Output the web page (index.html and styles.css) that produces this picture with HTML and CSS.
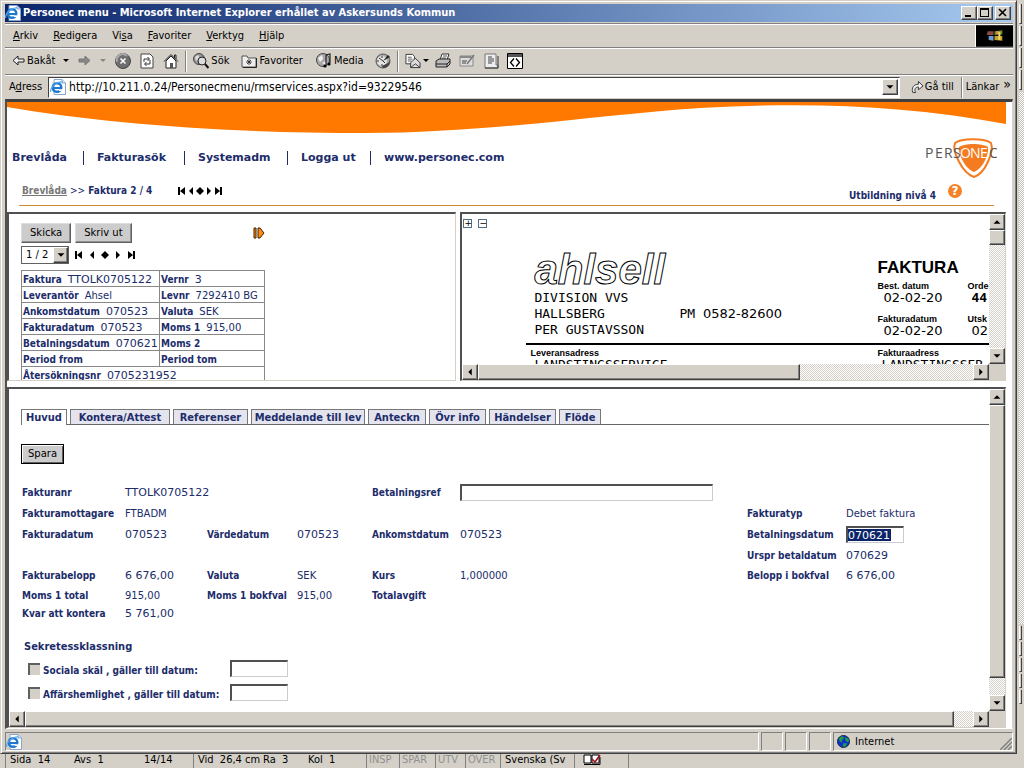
FILE: index.html
```html
<!DOCTYPE html>
<html lang="sv">
<head>
<meta charset="utf-8">
<title>Personec menu</title>
<link rel="stylesheet" href="styles.css">
</head>
<body>
<svg class="defs" aria-hidden="true">
  <symbol id="ie" viewBox="0 0 16 16">
    <path d="M4 .5H12L15.500 4V15.500H4Z" fill="#fff" stroke="#8aa6cc"/>
    <path d="M12 .5V4H15.500" fill="#cfe0f5" stroke="#8aa6cc"/>
    <circle cx="7" cy="8.500" r="4.300" fill="none" stroke="#1f78d0" stroke-width="2.400"/>
    <path d="M3 9H11" stroke="#1f78d0" stroke-width="2"/>
    <path d="M9 10.300H13V12H9Z" fill="#fff"/>
    <path d="M1 13C-1 9 7 2 12.500 3" fill="none" stroke="#58a8ec" stroke-width="1.200"/>
  </symbol>
  <symbol id="up" viewBox="0 0 16 16"><path d="M4 10H12L8 6Z"/></symbol>
  <symbol id="down" viewBox="0 0 16 16"><path d="M4 6H12L8 10Z"/></symbol>
  <symbol id="left" viewBox="0 0 16 16"><path d="M10 4V12L6 8Z"/></symbol>
  <symbol id="right" viewBox="0 0 16 16"><path d="M6 4V12L10 8Z"/></symbol>
  <symbol id="first" viewBox="0 0 8 8"><path d="M0 0H2V8H0ZM7 0V8L2 4Z"/></symbol>
  <symbol id="prev" viewBox="0 0 8 8"><path d="M6 0V8L2 4Z"/></symbol>
  <symbol id="mid" viewBox="0 0 8 8"><path d="M4 0L8 4L4 8L0 4Z"/></symbol>
  <symbol id="next" viewBox="0 0 8 8"><path d="M2 0V8L6 4Z"/></symbol>
  <symbol id="last" viewBox="0 0 8 8"><path d="M6 0H8V8H6ZM1 0V8L6 4Z"/></symbol>
</svg>

<div class="desktop">
<main class="window">
  <header class="titlebar">
    <svg class="i16"><use href="#ie"/></svg>
    <h1>Personec menu - Microsoft Internet Explorer erhållet av Askersunds Kommun</h1>
    <div class="winbtns">
      <button aria-label="Minimera"><svg viewBox="0 0 12 10"><path d="M2 7H8V9H2Z"/></svg></button>
      <button aria-label="Maximera"><svg viewBox="0 0 12 10"><path d="M1 0H10V9H1ZM2 2V8H9V2Z" fill-rule="evenodd"/></svg></button>
      <button class="close" aria-label="Stäng"><svg viewBox="0 0 12 10"><path d="M2 1L9 8M9 1L2 8" stroke="#000" stroke-width="1.600"/></svg></button>
    </div>
  </header>

  <div class="menubar">
    <nav class="menus">
      <button><u>A</u>rkiv</button><button><u>R</u>edigera</button><button>Vi<u>s</u>a</button><button><u>F</u>avoriter</button><button><u>V</u>erktyg</button><button><u>H</u>jälp</button>
    </nav>
    <svg class="flag" viewBox="0 0 38 22"><path d="M0 0H38V22H0Z" fill="#000"/><path d="M12 6H18V10H11Z" fill="#8c4a40"/><path d="M19 6L27 5V9.500L19 10Z" fill="#6b8f3e"/><path d="M21 6H24V9H21Z" fill="#ff8a20"/><path d="M13 11H18V16L13 15Z" fill="#6d9ad0"/><path d="M19 11H27V16L19 15Z" fill="#c9a22c"/><path d="M23 7H25V15H23Z" fill="#e8dc60"/></svg>
  </div>

  <div class="toolbar">
    <button class="tool back"><svg viewBox="0 0 13 12"><path d="M6 1L1 5.500L6 10V7H12V4H6Z" fill="#eee" stroke="#222"/></svg>Bakåt</button>
    <button class="tool drop" aria-label="Bakåtlista"><svg viewBox="0 0 6 4"><path d="M0 0H6L3 3Z"/></svg></button>
    <button class="tool fwd" aria-label="Framåt"><svg viewBox="0 0 13 12"><path d="M7 1L12 5.500L7 10V7H1V4H7Z" fill="#888" stroke="#777"/></svg></button>
    <button class="tool drop dim" aria-label="Framåtlista"><svg viewBox="0 0 6 4"><path d="M0 0H6L3 3Z" fill="#888"/></svg></button>
    <button class="tool stop" aria-label="Stopp"><svg viewBox="0 0 16 16"><circle cx="8" cy="8" r="7.500" fill="#6e6e6e" stroke="#444"/><path d="M2 9A6 6 0 0 1 12 3" fill="none" stroke="#aaa" stroke-width="2"/><path d="M5.500 5.500L10.500 10.500M10.500 5.500L5.500 10.500" stroke="#fff" stroke-width="1.500"/></svg></button>
    <button class="tool refresh" aria-label="Uppdatera"><svg viewBox="0 0 14 16"><path d="M1 1H10L13 4V15H1Z" fill="#fff" stroke="#444"/><path d="M4 9V6H9M7.500 4L9.500 6L7.500 8M10 7V11H5M6.500 9L4.500 11L6.500 13" fill="none" stroke="#333"/></svg></button>
    <button class="tool home" aria-label="Hem"><svg viewBox="0 0 16 16"><path d="M3 8V15H13V8L8 3Z" fill="#fff" stroke="#222"/><path d="M1 8.500L8 1.500L15 8.500M11.500 5V2H13V6" fill="none" stroke="#222"/><path d="M7 10H10V15H7Z" fill="#555"/></svg></button>
    <i class="sep"></i>
    <button class="tool search"><svg viewBox="0 0 16 16"><circle cx="6" cy="6" r="5.500" fill="#999" stroke="#444"/><path d="M2 4L5 2L7 5L3 8Z" fill="#ddd"/><circle cx="9" cy="8" r="4" fill="#ddd" stroke="#222"/><path d="M12 11L15.500 15" stroke="#111" stroke-width="2"/></svg>Sök</button>
    <button class="tool favs"><svg viewBox="0 0 16 16"><path d="M1 3H6L7 5H15V14H1Z" fill="#eee" stroke="#555"/><path d="M2 14.500H15.500V5" fill="none" stroke="#222"/><path d="M8 6V12M5 9H11M6 7L10 11M10 7L6 11" stroke="#222" stroke-width=".8"/></svg>Favoriter</button>
    <button class="tool media"><svg viewBox="0 0 16 16"><circle cx="7" cy="7" r="6.500" fill="#aaa" stroke="#444"/><path d="M2 5L6 2L7 6L4 9ZM6 10L10 8V12Z" fill="#eee"/><path d="M10 12V2L14 1V10" fill="none" stroke="#222" stroke-width="1.200"/><circle cx="9" cy="13" r="1.600"/><circle cx="13" cy="11" r="1.600"/></svg>Media</button>
    <button class="tool history" aria-label="Tidigare"><svg viewBox="0 0 16 16"><circle cx="8" cy="8" r="7" fill="#aaa" stroke="#555"/><circle cx="7" cy="8" r="5" fill="#e4e4e4"/><path d="M8 8L13 2L15 4Z" fill="#222"/><path d="M15 8A7 7 0 0 1 8 15L7 13L13 10Z" fill="#444"/><path d="M7 3V5M2 8H4M7 11V13M4 5L8 8L10 10" stroke="#333" fill="none"/></svg></button>
    <i class="sep"></i>
    <button class="tool mail" aria-label="E-post"><svg viewBox="0 0 17 16"><path d="M1 1H8L10 3V11H1Z" fill="#fff" stroke="#333"/><path d="M3 4H7M3 6H8M3 8H7" stroke="#555"/><path d="M6 10L11 5L16 10V15H6Z" fill="#ddd" stroke="#333"/><path d="M6 15L11 11L16 15" fill="none" stroke="#333"/></svg><svg class="caret" viewBox="0 0 6 4"><path d="M0 0H6L3 3Z"/></svg></button>
    <button class="tool print" aria-label="Skriv ut"><svg viewBox="0 0 16 16"><path d="M5 7L7 1H14L12 7Z" fill="#fff" stroke="#333"/><path d="M8 3H12M7 5H11" stroke="#555"/><path d="M1 8L4 6H15V11L12 14H1Z" fill="#bbb" stroke="#222"/><path d="M1 11H12V14M12 11L15 8" fill="none" stroke="#222"/></svg></button>
    <button class="tool edit" aria-label="Redigera"><svg viewBox="0 0 16 16"><path d="M1 3H14V13H1Z" fill="#ddd" stroke="#888"/><path d="M1 4H12" stroke="#888" stroke-width="2"/><path d="M3 8H8M3 10H7M8 11L15 2" stroke="#777" stroke-width="1.500"/></svg></button>
    <button class="tool notes" aria-label="Anteckning"><svg viewBox="0 0 16 16"><path d="M2 1H13V12H15V15H2Z" fill="#eee" stroke="#777"/><path d="M15 3V15H2" fill="none" stroke="#333"/><path d="M5 4H9M5 6H11M5 8H11M5 10H9" stroke="#444"/></svg></button>
    <button class="tool source" aria-label="Källa"><svg viewBox="0 0 16 16"><path d="M.5 .5H15.500V15.500H.5Z" fill="#fff" stroke="#000"/><path d="M1 1H15V4H1Z" fill="#555"/><path d="M7 5.500L3.500 9.500L7 13.500M9 5.500L12.500 9.500L9 13.500" fill="none" stroke="#000" stroke-width="1.300"/></svg></button>
  </div>

  <div class="addressbar">
    <label for="url">A<u>d</u>ress</label>
    <div class="urlbox">
      <svg class="i16"><use href="#ie"/></svg>
      <input id="url" type="text" value="http://10.211.0.24/Personecmenu/rmservices.aspx?id=93229546">
      <button class="sb" aria-label="Visa adresser"><svg><use href="#down"/></svg></button>
    </div>
    <button class="tool go"><svg viewBox="0 0 14 14"><path d="M2 13C0 8 3 4 8 4V1L13 6L8 10V7C5 7 3 9 5 13Z" fill="#eee" stroke="#333"/></svg>Gå till</button>
    <i class="sep"></i>
    <button class="tool links">Länkar</button><button class="tool more" aria-label="Fler länkar">»</button>
  </div>

  <section class="page">
    <svg class="swoosh" viewBox="0 0 1000 32" preserveAspectRatio="none"><path d="M0 0H1000V22C900 3 800 0 694 6C600 12 480 31 360 31C220 31 100 22 0 5Z" fill="#ff7800"/></svg>
    <div class="navrow">
      <nav class="mainnav"><a href="#">Brevlåda</a><a href="#">Fakturasök</a><a href="#">Systemadm</a><a href="#">Logga ut</a><a href="#">www.personec.com</a></nav>
      <svg class="logo" viewBox="0 0 74 42" role="img" aria-label="Personec">
        <path d="M32 6C38 1 62 1 68 6C71 14 63 36 51 40C39 36 29 14 32 6Z" fill="#fff" stroke="#f47b20" stroke-width="2"/>
        <path d="M36 10C42 6 59 6 65 10C66 16 61 31 51 35C41 31 35 16 36 10Z" fill="#f47b20"/>
        <text x="2" y="21" class="lt">P</text><text x="12" y="21" class="lt">E</text><text x="21" y="21" class="lt">R</text><text x="30" y="21" class="lt">S</text><text x="37" y="21" class="lt on">O</text><text x="47" y="21" class="lt on">N</text><text x="57" y="21" class="lt on">E</text><text x="66" y="21" class="lt">C</text>
      </svg>
    </div>
    <div class="crumbs">
      <div class="trail"><a href="#">Brevlåda</a> <span class="gt">&gt;&gt;</span> <b>Faktura</b> <span class="cnt">2 / 4</span></div>
      <div class="pager tight"><button aria-label="Första"><svg><use href="#first"/></svg></button><button aria-label="Föregående"><svg><use href="#prev"/></svg></button><button aria-label="Aktuell"><svg><use href="#mid"/></svg></button><button aria-label="Nästa"><svg><use href="#next"/></svg></button><button aria-label="Sista"><svg><use href="#last"/></svg></button></div>
      <b class="level">Utbildning nivå 4</b>
      <button class="help" aria-label="Hjälp">?</button>
    </div>

    <div class="panes">
      <section class="frame summary">
        <div class="sumtop">
          <button class="btn">Skicka</button><button class="btn">Skriv ut</button>
          <svg class="play" viewBox="0 0 12 12"><path d="M1 1H3V11H1ZM5 1H7L11 6L7 11H5Z" fill="#ff8a10" stroke="#402000"/></svg>
        </div>
        <div class="sumnav">
          <div class="pick"><select aria-label="Sida"><option>1 / 2</option></select><span class="sb"><svg><use href="#down"/></svg></span></div>
          <div class="pager"><button aria-label="Första"><svg><use href="#first"/></svg></button><button aria-label="Föregående"><svg><use href="#prev"/></svg></button><button aria-label="Aktuell"><svg><use href="#mid"/></svg></button><button aria-label="Nästa"><svg><use href="#next"/></svg></button><button aria-label="Sista"><svg><use href="#last"/></svg></button></div>
        </div>
        <table class="info">
          <tr><td><b>Faktura</b><span>TTOLK0705122</span></td><td><b>Vernr</b><span>3</span></td></tr>
          <tr><td><b>Leverantör</b><span class="t">Ahsel</span></td><td><b>Levnr</b><span class="t">7292410 BG</span></td></tr>
          <tr><td><b>Ankomstdatum</b><span>070523</span></td><td><b>Valuta</b><span class="t">SEK</span></td></tr>
          <tr><td><b>Fakturadatum</b><span>070523</span></td><td><b>Moms 1</b><span class="t">915,00</span></td></tr>
          <tr><td><b>Betalningsdatum</b><span>070621</span></td><td><b>Moms 2</b></td></tr>
          <tr><td><b>Period from</b></td><td><b>Period tom</b></td></tr>
          <tr><td colspan="2"><b>Återsökningsnr</b><span>0705231952</span></td></tr>
        </table>
      </section>

      <section class="frame viewer scroller">
        <div class="scan">
          <div class="zoomers"><button aria-label="Förstora">+</button><button aria-label="Förminska">−</button></div>
          <div class="sheet">
            <div class="sender">
              <div class="company">ahlsell</div>
              <p>DIVISION VVS</p>
              <p class="two"><span>HALLSBERG</span><span>PM <span class="num">0582-82600</span></span></p>
              <p>PER GUSTAVSSON</p>
            </div>
            <div class="facts">
              <h2>FAKTURA</h2>
              <div class="pair"><div><small>Best. datum</small><span class="num">02-02-20</span></div><div><small>Orde</small><b>44</b></div></div>
              <div class="pair"><div><small>Fakturadatum</small><span class="num">02-02-20</span></div><div><small>Utsk</small><span class="num">02</span></div></div>
            </div>
          </div>
          <div class="addresses">
            <div><small>Leveransadress</small><p>LANDSTINGSSERVICE</p></div>
            <div><small>Fakturaadress</small><p>LANDSTINGSSER</p></div>
          </div>
        </div>
        <div class="vbar"><button class="sb" aria-label="Upp"><svg><use href="#up"/></svg></button><div class="track"><i class="thumb v1"></i></div><button class="sb" aria-label="Ned"><svg><use href="#down"/></svg></button></div>
        <div class="hbar"><button class="sb" aria-label="Vänster"><svg><use href="#left"/></svg></button><div class="track"><i class="thumb h1"></i></div><button class="sb" aria-label="Höger"><svg><use href="#right"/></svg></button></div>
        <div class="corner"></div>
      </section>
    </div>

    <section class="frame scroller detail">
      <form class="body">
        <nav class="tabs"><a class="on" href="#">Huvud</a><a href="#">Kontera/Attest</a><a href="#">Referenser</a><a href="#">Meddelande till lev</a><a href="#">Anteckn</a><a href="#">Övr info</a><a href="#">Händelser</a><a href="#">Flöde</a></nav>
        <button type="button" class="btn save">Spara</button>
        <div class="fields">
          <b class="c1">Fakturanr</b><span class="c2">TTOLK0705122</span><label class="c5" for="ref">Betalningsref</label><input class="c6 ref" id="ref" type="text">
          <b class="c1">Fakturamottagare</b><span class="c2 t">FTBADM</span><b class="c7">Fakturatyp</b><span class="c8 t">Debet faktura</span>
          <b class="c1">Fakturadatum</b><span class="c2">070523</span><b class="c3">Värdedatum</b><span class="c4">070523</span><b class="c5">Ankomstdatum</b><span class="c6">070523</span><label class="c7" for="due">Betalningsdatum</label><input class="c8 date marked" id="due" type="text" value="070621">
          <b class="c7">Urspr betaldatum</b><span class="c8">070629</span>
          <b class="c1">Fakturabelopp</b><span class="c2">6 676,00</span><b class="c3">Valuta</b><span class="c4 t">SEK</span><b class="c5">Kurs</b><span class="c6 t">1,000000</span><b class="c7">Belopp i bokfval</b><span class="c8">6 676,00</span>
          <b class="c1">Moms 1 total</b><span class="c2 t">915,00</span><b class="c3">Moms 1 bokfval</b><span class="c4 t">915,00</span><b class="c5">Totalavgift</b>
          <b class="c1">Kvar att kontera</b><span class="c2">5 761,00</span>
        </div>
        <fieldset class="secrecy">
          <legend>Sekretessklassning</legend>
          <div class="sec"><input type="checkbox" id="s1"><label for="s1">Sociala skäl , gäller till datum:</label><input class="date" type="text" aria-label="Sociala skäl, datum"></div>
          <div class="sec"><input type="checkbox" id="s2"><label for="s2">Affärshemlighet , gäller till datum:</label><input class="date" type="text" aria-label="Affärshemlighet, datum"></div>
        </fieldset>
      </form>
      <div class="vbar"><button class="sb" aria-label="Upp"><svg><use href="#up"/></svg></button><div class="track"><i class="thumb v2"></i></div><button class="sb" aria-label="Ned"><svg><use href="#down"/></svg></button></div>
      <div class="hbar"><button class="sb" aria-label="Vänster"><svg><use href="#left"/></svg></button><div class="track"><i class="thumb h2"></i></div><button class="sb" aria-label="Höger"><svg><use href="#right"/></svg></button></div>
      <div class="corner"></div>
    </section>
  </section>

  <footer class="status">
    <div><svg class="i16"><use href="#ie"/></svg></div><div></div><div></div><div></div>
    <div class="zone"><svg class="globe" viewBox="0 0 14 14"><circle cx="7" cy="7" r="6.500" fill="#1030d0" stroke="#102040"/><path d="M2 4L5 1L8 3L5 6L6 8L3 7ZM9 2L13 5L12 8L9 6ZM7 9L11 9L9 13L6 12Z" fill="#20a040"/></svg>Internet<svg class="grip" viewBox="0 0 12 12"><path d="M0 12L12 0M4 12L12 4M8 12L12 8" stroke="#808080" stroke-width="1.500"/></svg></div>
  </footer>
</main>

<aside class="strip"><i></i><i></i><i></i><i></i><i class="gapfill"></i><i></i><i></i><i></i><i></i><i></i><i class="tail"></i></aside>

<footer class="word">
  <span class="cell">Sida&nbsp; 14</span><span>Avs&nbsp; 1</span><span>14/14</span><span class="cell">Vid&nbsp; 26,4 cm</span><span>Ra&nbsp; 3</span><span>Kol&nbsp; 1</span><span class="cell off">INSP</span><span class="cell off">SPÄR</span><span class="cell off">UTV</span><span class="cell off">ÖVER</span><span class="cell">Svenska (Sv</span><span class="cell"><svg viewBox="0 0 18 12"><path d="M1 1H8V9H1ZM9 1H16V9H9Z" fill="#fff" stroke="#000"/><path d="M1 10.500H17V3" fill="none" stroke="#000"/><path d="M9 5L12 8L17 1" fill="none" stroke="#a01020" stroke-width="1.600"/></svg></span><span class="cell"></span>
</footer>
</div>
</body>
</html>
```

FILE: styles.css
```css
:root {
  --face: #d4d0c8;
  --navy: #202c6a;
  --ui: "DejaVu Sans Condensed", "DejaVu Sans", sans-serif;
  --wide: "DejaVu Sans", sans-serif;
}
* { box-sizing: border-box; }
body { margin: 0; background: var(--face); font: 11px/14px var(--ui); color: #000; }
button, input, select { font: inherit; color: inherit; margin: 0; padding: 0; border: 0; border-radius: 0; background: none; }
p, h1, h2 { margin: 0; font: inherit; }
svg { display: block; flex: none; }
.defs { position: absolute; width: 0; height: 0; }
.i16 { width: 16px; height: 16px; }

.desktop { display: grid; grid-template: minmax(0, 1fr) 14px / minmax(0, 1fr) 7px; height: 100vh; overflow: hidden; }
.window { display: flex; flex-direction: column; min-height: 0; padding: 3px 3px 2px 4px; background: var(--face); border: 1px solid #404040; border-top-color: var(--face); border-left-color: var(--face); box-shadow: inset 1px 1px #fff, inset -1px -1px #808080; }

/* Title bar */
.titlebar { display: flex; align-items: center; gap: 2px; height: 18px; background: linear-gradient(90deg, #0a246a, #a6caf0); color: #fff; }
.titlebar h1 { flex: 1; font-weight: bold; white-space: nowrap; }
.winbtns { display: flex; padding-right: 2px; }
.winbtns button { width: 16px; height: 14px; padding: 1px; }
.winbtns .close { margin-left: 2px; }
.winbtns svg { width: 12px; height: 10px; }
.winbtns button, .sb, .thumb { background: var(--face); border: 1px solid; border-color: #fff #404040 #404040 #fff; box-shadow: inset -1px -1px #808080; }

/* Browser bars */
.menubar, .toolbar, .addressbar { display: flex; align-items: center; border-top: 1px solid #808080; box-shadow: inset 0 1px #fff; }
.menubar { height: 24px; margin-top: 1px; justify-content: space-between; }
.menus { display: flex; gap: 15px; padding-left: 8px; }
.flag { width: 38px; height: 22px; border-left: 1px solid #fff; }
.toolbar { height: 27px; padding-left: 7px; }
.tool { display: flex; align-items: center; gap: 2px; white-space: nowrap; }
.tool svg { width: 16px; height: 16px; }
.tool.back svg, .tool.fwd svg { width: 13px; height: 12px; }
.tool.drop { margin: 0 9px 0 8px; }
.tool.drop.dim { margin: 0 9px; }
.tool.drop svg, .tool svg.caret { width: 6px; height: 4px; }
.refresh { margin: 0 8px; }
.sep { width: 2px; height: 21px; margin: 0 6px; border-left: 1px solid #808080; border-right: 1px solid #fff; }
.favs { margin: 0 13px 0 12px; }
.history { margin-left: 11px; }
.print { margin-left: 6px; }
.edit, .notes, .source { margin-left: 8px; }
.addressbar { height: 25px; padding: 0 2px 0 4px; }
.urlbox { display: flex; align-items: center; flex: 1; height: 21px; margin-left: 6px; padding: 0 1px; background: #fff; border: 1px solid; border-color: #404040 #fff #fff #404040; }
.urlbox input { flex: 1; min-width: 0; padding-left: 3px; outline: 0; font-size: 12px; }
.sb { flex: none; width: 16px; height: 16px; }
.sb svg { width: 14px; height: 14px; }
.tool.go { margin-left: 11px; gap: 1px; }
.tool.go svg { width: 13px; height: 14px; }
.addressbar .sep { margin: 0 3px 0 7px; }
.more { margin-left: 4px; font-size: 14px; line-height: 14px; padding-bottom: 6px; }

/* Page */
.page { display: flex; flex-direction: column; flex: 1; min-height: 0; background: #fff; color: var(--navy); padding: 0 6px 0 0; border: 1px solid #a0a0a0; border-top: 3px solid #404040; border-left: 2px solid #505050; border-right-color: var(--face); border-bottom-color: #fff; }
.swoosh { width: 100%; height: 32px; flex: none; }
.navrow { display: flex; align-items: center; justify-content: space-between; height: 48px; padding: 0 9px 0 5px; flex: none; }
.mainnav { display: grid; grid-template-columns: 71px 101px 103px 83px auto; font: bold 11px/14px var(--wide); white-space: nowrap; }
.mainnav a { color: inherit; text-decoration: none; }
.mainnav a + a { padding-left: 13px; border-left: 1px solid var(--navy); }
.logo { width: 74px; height: 42px; }
.lt { font: 14px "Open Sans", sans-serif; fill: #555; }
.on.lt { fill: #fff; }
.crumbs { display: flex; align-items: center; flex: none; height: 24px; margin: 0 12px 6px; padding: 0 32px 6px 3px; border-bottom: 1px solid #d08a30; font-size: 10px; }
.trail { font-weight: bold; }
.trail a { color: #777; }
.gt { font-weight: normal; }
.pager { display: flex; gap: 5px; }
.pager.tight { gap: 1px; margin-left: 26px; }
.pager button, .pager svg { width: 8px; height: 8px; }
.level { margin-left: auto; padding-top: 10px; }
.help { width: 14px; height: 14px; margin-left: 12px; border-radius: 50%; background: #f58228; color: #fff; font: bold 12px/14px var(--wide); }

/* Frames */
.frame { min-width: 0; min-height: 0; overflow: hidden; border: 1px solid var(--face); border-top: 2px solid #505050; border-left: 2px solid #505050; }
.panes { display: grid; grid-template-columns: 449fr 545fr; gap: 4px; height: 169px; margin-bottom: 6px; flex: none; }
.scroller { display: grid; grid-template: minmax(0, 1fr) 16px / minmax(0, 1fr) 16px; }
.detail { flex: 1; }
.vbar { display: flex; flex-direction: column; }
.hbar { display: flex; }
.track { flex: 1; display: flex; background: repeating-conic-gradient(#fff 0 25%, #d4d0c8 0 50%) 0 0 / 2px 2px; }
.vbar .track { flex-direction: column; }
.corner { background: var(--face); }
.v1 { height: 13%; }
.v2 { height: 94%; }
.h1 { width: 65%; }
.h2 { width: 98%; }
.btn { height: 20px; padding: 0 8px; background: #ccc; color: #000; font: 10px/14px var(--wide); border: 1px solid; border-color: #ddd #606060 #606060 #ddd; box-shadow: inset -1px -1px #909090; }

/* Summary */
.summary { padding: 9px 0 0 12px; }
.sumtop { display: flex; align-items: center; gap: 4px; }
.play { width: 12px; height: 12px; margin-left: 117px; }
.sumnav { display: flex; align-items: center; gap: 6px; margin: 3px 0 6px; }
.pick { position: relative; width: 48px; height: 18px; border: 1px solid #606060; background: #fff; }
.pick select { width: 100%; height: 16px; padding-left: 4px; appearance: none; font: 10px/14px var(--wide); color: #000; }
.pick .sb { position: absolute; right: 0; top: 0; width: 15px; pointer-events: none; }
.info { width: 244px; table-layout: fixed; border-collapse: collapse; font-size: 10px; }
.info td { height: 16px; padding: 1px 1px 0; border: 1px solid #888; line-height: 13px; white-space: nowrap; }
.info td:first-child { width: 138px; }
.info span { margin-left: 6px; font: 11px/13px var(--wide); }
.info .t { font-size: 10px; }

/* Scanned invoice */
.scan { overflow: hidden; color: #000; font: 13px/16px "DejaVu Sans Mono", monospace; white-space: nowrap; }
.zoomers { display: flex; gap: 6px; height: 36px; padding: 5px 0 0 1px; }
.zoomers button { width: 9px; height: 9px; border: 1px solid #507080; font: 9px/7px var(--wide); }
.sheet { display: grid; grid-template-columns: 343px 1fr; margin: 0 0 0 64px; padding-left: 8px; height: 95px; border-bottom: 2px solid #000; }
.company { height: 40px; font: italic bold 42px/40px "Liberation Sans", sans-serif; color: #fff; -webkit-text-stroke: 1px #000; }
.two { display: grid; grid-template-columns: 145px 1fr; }
.num { font: 13px/12px var(--wide); }
.facts h2 { font: bold 17px/20px "Liberation Sans", sans-serif; padding-top: 8px; }
.pair { display: grid; grid-template-columns: 90px 1fr; height: 33px; }
.pair .num, .pair b { display: block; padding-left: 6px; line-height: 12px; }
.pair b, .pair div + div .num { padding-left: 4px; }
.pair small { padding-top: 3px; line-height: 11px; }
small { display: block; font: bold 9px/12px "Liberation Sans", sans-serif; }
.addresses { display: grid; grid-template-columns: 347px 1fr; padding: 2px 0 0 68px; }
.addresses p { padding-left: 4px; line-height: 12px; }

/* Invoice form */
.body { overflow: hidden; padding: 20px 0 0 12px; font-size: 10px; }
.tabs { display: grid; grid-template-columns: 46px 100px 75px 114px 58px 57px 67px 42px; gap: 3px; border-bottom: 1px solid #666; }
.tabs a { height: 15px; color: inherit; background: #e4e4ee; border: 1px solid #777; border-bottom: 0; text-decoration: none; text-align: center; font: bold 11px/16px var(--ui); white-space: nowrap; }
.tabs .on { background: #fff; height: 16px; margin-bottom: -1px; }
.save { display: block; margin: 19px 0 18px; padding: 0 6px; border-color: #000; box-shadow: inset 1px 1px #fff, inset -1px -1px #606060; }
.fields { display: grid; grid-template-columns: 103px 82px 90px 75px 88px 287px 99px 1fr; grid-template-rows: 21px 21px 21px 21px 20px 20px 16px; align-items: center; padding-left: 1px; white-space: nowrap; }
.fields span, .marked { font: 11px/14px var(--wide); }
.fields .t { font-size: 10px; }
.fields label { font-weight: bold; }
.c1 { grid-column: 1; } .c2 { grid-column: 2; } .c3 { grid-column: 3; } .c4 { grid-column: 4; }
.c5 { grid-column: 5; } .c6 { grid-column: 6; } .c7 { grid-column: 7; } .c8 { grid-column: 8; }
.ref, .date { height: 17px; background: #fff; border: 1px solid #ccc; border-top: 2px solid #505050; border-left: 2px solid #505050; outline: 0; }
.ref { width: 253px; }
.date { width: 58px; }
.marked { color: #fff; background: linear-gradient(#0a246a, #0a246a) no-repeat 0 1px / 43px 12px #fff; }
.secrecy { margin: 18px 0 0; padding: 0; border: 0; font-weight: bold; }
.secrecy legend { padding: 0 0 5px 3px; font: bold 11px/14px var(--ui); }
.sec { display: grid; grid-template-columns: 15px 187px 58px; align-items: center; height: 24px; padding-left: 7px; }
.sec input[type=checkbox] { appearance: none; width: 12px; height: 12px; margin-bottom: 4px; background: var(--face); border-top: 2px solid #606060; border-left: 2px solid #606060; }
.sec .date { margin-bottom: 5px; }

/* Status bars */
.status { display: grid; grid-template-columns: 1fr 22px 22px 22px 180px; gap: 2px; height: 22px; padding-top: 3px; }
.status div { display: flex; align-items: center; border: 1px solid; border-color: #808080 #fff #fff #808080; }
.globe { width: 13px; height: 13px; margin: 0 5px 0 3px; }
.grip { width: 12px; height: 12px; margin-left: auto; align-self: flex-end; }
.strip { display: flex; flex-direction: column; gap: 2px; padding: 4px 0 0 2px; background: var(--face); }
.strip i { height: 14px; width: 3px; border-right: 1px solid #404040; border-bottom: 1px solid #404040; border-left: 1px solid #fff; }
.strip i:nth-child(-n+4) { height: 20px; }
.strip .gapfill { flex: 1; width: 5px; border: 0; background: repeating-conic-gradient(#fff 0 25%, #c4c0b8 0 50%) 0 0 / 2px 2px; }
.strip .tail { height: 48px; border: 0; }
.word { grid-column: 1 / -1; display: grid; grid-template-columns: 65px 70px 53px 66px 45px 62px 33px 36px 30px 35px 74px 54px 1fr; padding-left: 5px; line-height: 12px; white-space: nowrap; overflow: hidden; }
.word span { padding-left: 4px; }
.word .cell { border-left: 1px solid #808080; }
.word .off { color: #909090; padding-left: 2px; }
.word svg { width: 18px; height: 12px; margin-left: 4px; }
```
